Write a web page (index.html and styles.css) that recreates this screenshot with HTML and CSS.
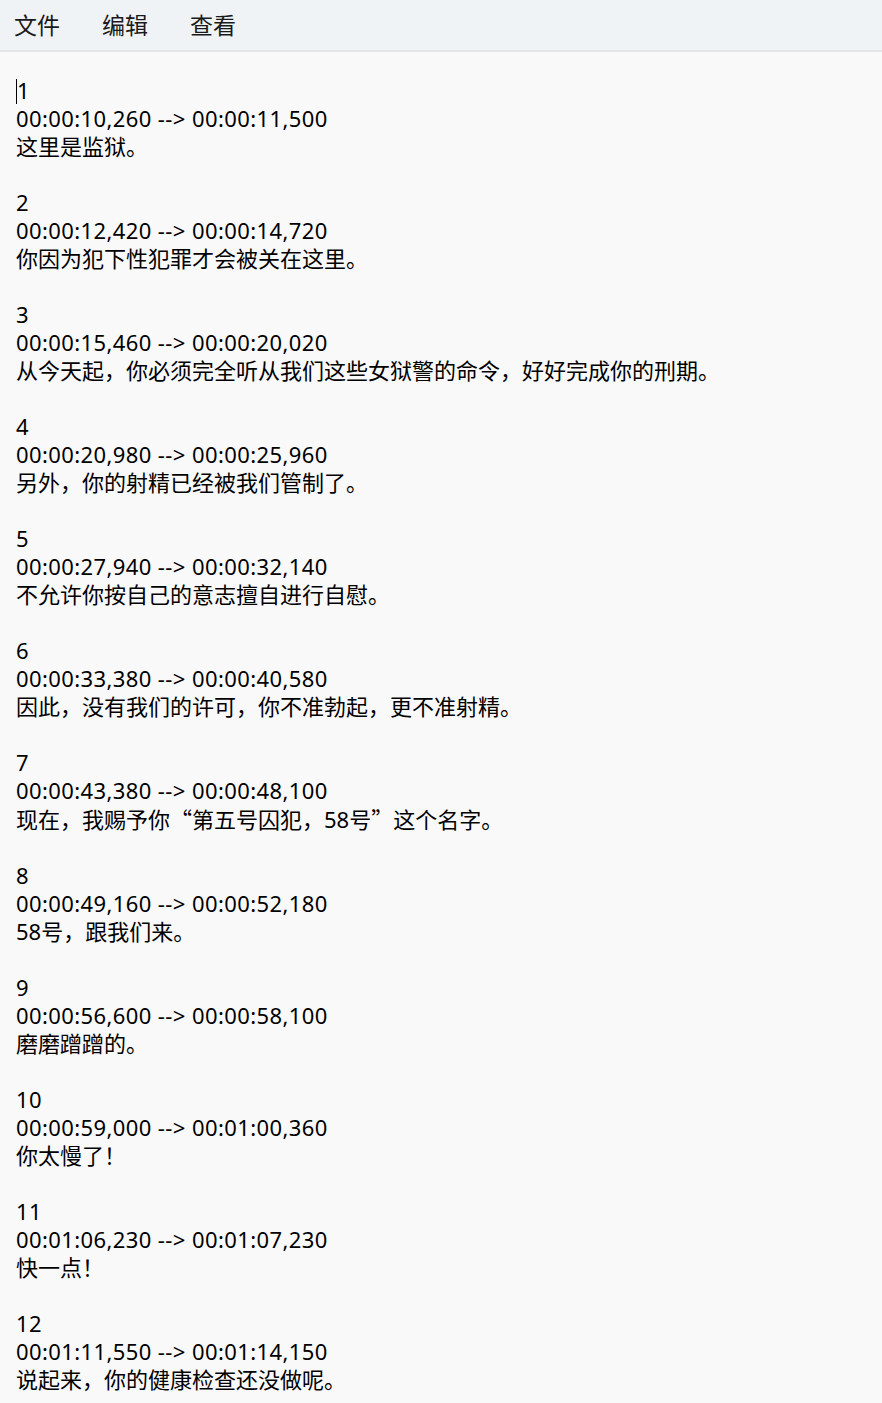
FILE: index.html
```html
<!DOCTYPE html>
<html lang="zh-CN">
  <head>
    <meta charset="UTF-8" />
    <title>subtitles.srt - 记事本</title>
    <link rel="stylesheet" href="styles.css">
  </head>
  <body>
    <!-- MENU BAR -->
    <nav class="menu-bar">
      <span class="menu-item">文件</span>
      <span class="menu-item">编辑</span>
      <span class="menu-item">查看</span>
    </nav>

    <!-- EDITOR -->
    <main class="editor">
<pre class="editor-text"><span class="caret"></span><span class="num">1
00:00:10,260 --> 00:00:11,500</span>
这里是监狱。

<span class="num">2
00:00:12,420 --> 00:00:14,720</span>
你因为犯下性犯罪才会被关在这里。

<span class="num">3
00:00:15,460 --> 00:00:20,020</span>
从今天起，你必须完全听从我们这些女狱警的命令，好好完成你的刑期。

<span class="num">4
00:00:20,980 --> 00:00:25,960</span>
另外，你的射精已经被我们管制了。

<span class="num">5
00:00:27,940 --> 00:00:32,140</span>
不允许你按自己的意志擅自进行自慰。

<span class="num">6
00:00:33,380 --> 00:00:40,580</span>
因此，没有我们的许可，你不准勃起，更不准射精。

<span class="num">7
00:00:43,380 --> 00:00:48,100</span>
现在，我赐予你<span class="cjk">“</span>第五号囚犯，58号<span class="cjk">”</span>这个名字。

<span class="num">8
00:00:49,160 --> 00:00:52,180</span>
58号，跟我们来。

<span class="num">9
00:00:56,600 --> 00:00:58,100</span>
磨磨蹭蹭的。

<span class="num">10
00:00:59,000 --> 00:01:00,360</span>
你太慢了！

<span class="num">11
00:01:06,230 --> 00:01:07,230</span>
快一点！

<span class="num">12
00:01:11,550 --> 00:01:14,150</span>
说起来，你的健康检查还没做呢。
</pre>
    </main>
  </body>
</html>
```

FILE: styles.css
```css
* {
  margin: 0;
  padding: 0;
  box-sizing: border-box;
}

body {
  font-family: "Noto Sans", "Noto Sans CJK SC", sans-serif;
  background: #f9f9f9;
  color: #000;
  height: 100vh;
  overflow: hidden;
}

/* MENU BAR */
.menu-bar {
  display: flex;
  align-items: center;
  gap: 42px;
  height: 52px;
  padding: 0 0 2px 14px;
  background: #f0f3f5;
  border-bottom: 2px solid #e3e5e7;
}
.menu-item {
  font-family: "Noto Sans CJK SC", sans-serif;
  font-size: 23px;
  color: #1a1a1a;
}

/* EDITOR AREA */
.editor {
  padding: 24px 16px 0;
}
.editor-text {
  font-family: "Noto Sans", "Noto Sans CJK SC", sans-serif;
  font-size: 22px;
  line-height: 28px;
  white-space: pre;
}
/* index + timestamp lines run a bit wider than the default latin face */
.editor-text .num {
  letter-spacing: 0.4px;
}
/* full-width curly quotes as the CJK face draws them */
.editor-text .cjk {
  font-family: "Noto Sans CJK SC", sans-serif;
}
.caret {
  display: inline-block;
  width: 0;
  height: 25px;
  border-left: 1px solid #000;
  vertical-align: -5px;
}
```
